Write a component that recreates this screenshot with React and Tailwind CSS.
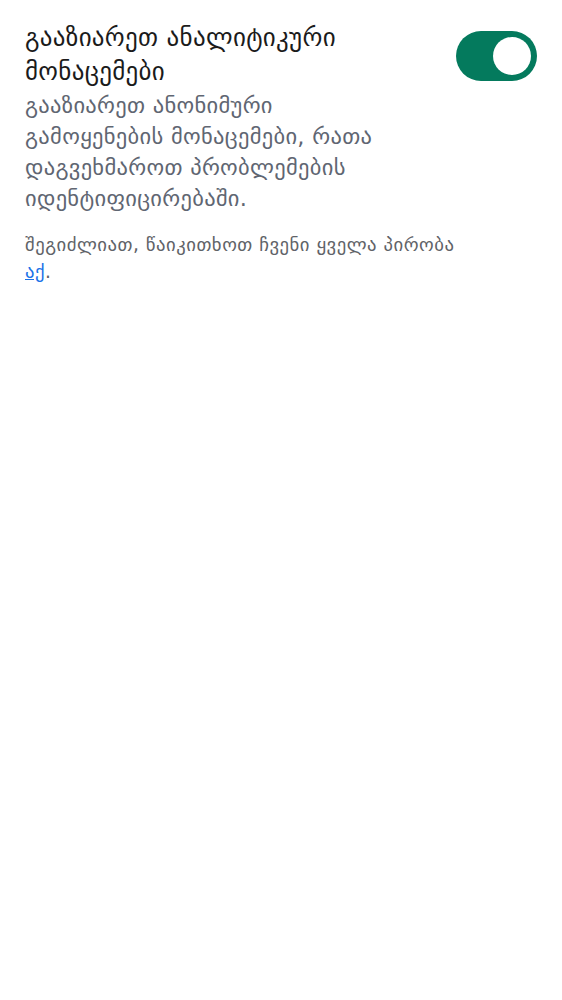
export default function App() {
  const font = { fontFamily: '"DejaVu Sans", "Noto Sans", sans-serif' };
  return (
    <div className="min-h-[1000px] w-[562px] bg-white" style={font}>
      <div className="pl-[25px] pr-[25px] pt-[21px]">
        <div className="flex items-start">
          <div className="w-[365px] flex flex-col">
            <div className="text-[25px] leading-[34px] text-[#1b1b1b] tracking-[0.3px]">
              გააზიარეთ ანალიტიკური მონაცემები
            </div>
            <div className="text-[22.5px] leading-[31px] text-[#5f6672] mt-[1px] tracking-[0.3px]">
              გააზიარეთ ანონიმური გამოყენების მონაცემები, რათა დაგვეხმაროთ პრობლემების იდენტიფიცირებაში.
            </div>
          </div>
          <div className="ml-auto mt-[10px] w-[81px] h-[50px] rounded-full bg-[#047a5d] flex items-center justify-end pr-[6px]">
            <div className="w-[38px] h-[38px] rounded-full bg-white" />
          </div>
        </div>
        <div className="w-[445px] text-[18.7px] leading-[27px] text-[#5f6368] mt-[17px] tracking-[0.5px]">
          შეგიძლიათ, წაიკითხოთ ჩვენი ყველა პირობა{" "}
          <a className="text-[#1a73e8] underline">აქ</a>.
        </div>
      </div>
    </div>
  );
}
